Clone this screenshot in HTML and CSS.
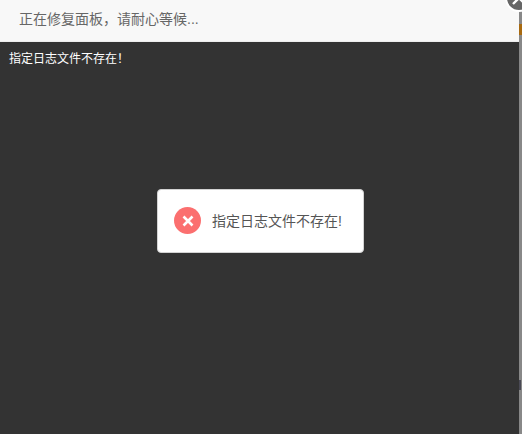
FILE: index.html
```html
<!DOCTYPE html>
<html lang="zh-CN">
<head>
    <meta charset="UTF-8">
    <title>正在修复面板</title>
    <link rel="stylesheet" href="styles.css">
</head>
<body>

<div class="window">
    <div class="main">
        <div class="title">正在修复面板，请耐心等候...</div>
        <div class="log">指定日志文件不存在！</div>
    </div>
    <div class="edge">
        <div class="edge-mark"></div>
        <div class="edge-glyph"></div>
    </div>
</div>

<a class="close-btn" href="#">
    <svg width="14" height="14" viewBox="0 0 14 14">
        <path d="M1 1 L13 13 M13 1 L1 13" stroke="#fff" stroke-width="2.4"/>
    </svg>
</a>

<div class="msg">
    <span class="msg-icon">
        <svg width="12" height="12" viewBox="0 0 12 12">
            <path d="M1.5 1.5 L10.5 10.5 M10.5 1.5 L1.5 10.5" stroke="#fff" stroke-width="2.6"/>
        </svg>
    </span>
    <span class="msg-text">指定日志文件不存在!</span>
</div>

</body>
</html>
```

FILE: styles.css
```css
html, body {
    height: 100%;
}

body {
    margin: 0;
    font-family: "Liberation Sans", "Noto Sans CJK SC", sans-serif;
    overflow: hidden;
    background-color: #333;
}

.window {
    display: flex;
    height: 434px;
}

.main {
    flex: 1;
    display: flex;
    flex-direction: column;
    background-color: #333;
}

.title {
    height: 42px;
    line-height: 39px;
    padding-left: 19px;
    box-sizing: border-box;
    background-color: #f8f8f8;
    border-bottom: 1px solid #eee;
    color: #666;
    font-size: 14px;
}

.log {
    padding-left: 9px;
    padding-top: 9px;
    color: #fff;
    font-size: 12px;
    line-height: 17px;
}

.edge {
    width: 3px;
    background-color: #888;
    padding-top: 24px;
    box-sizing: border-box;
}

.edge-mark {
    height: 11px;
    background-color: #a86a10;
}

.edge-glyph {
    width: 2px;
    height: 10px;
    margin-top: 345px;
    background-color: #4a4a55;
}

.close-btn {
    position: absolute;
    top: -16px;
    left: 505px;
    width: 24px;
    height: 24px;
    border-radius: 50%;
    border: 2px solid #fff;
    background-color: #666;
    display: flex;
    align-items: center;
    justify-content: center;
}

.msg {
    position: absolute;
    left: 157px;
    top: 189px;
    width: 207px;
    height: 64px;
    box-sizing: border-box;
    background-color: #fff;
    border: 1px solid #d3d3d3;
    border-radius: 4px;
    display: flex;
    align-items: center;
    padding-left: 16px;
    padding-bottom: 1px;
}

.msg-icon {
    width: 27px;
    height: 27px;
    border-radius: 50%;
    background-color: #fb6f6f;
    display: flex;
    align-items: center;
    justify-content: center;
}

.msg-text {
    margin-left: 11px;
    margin-bottom: 2px;
    color: #555;
    font-size: 14px;
}
```
